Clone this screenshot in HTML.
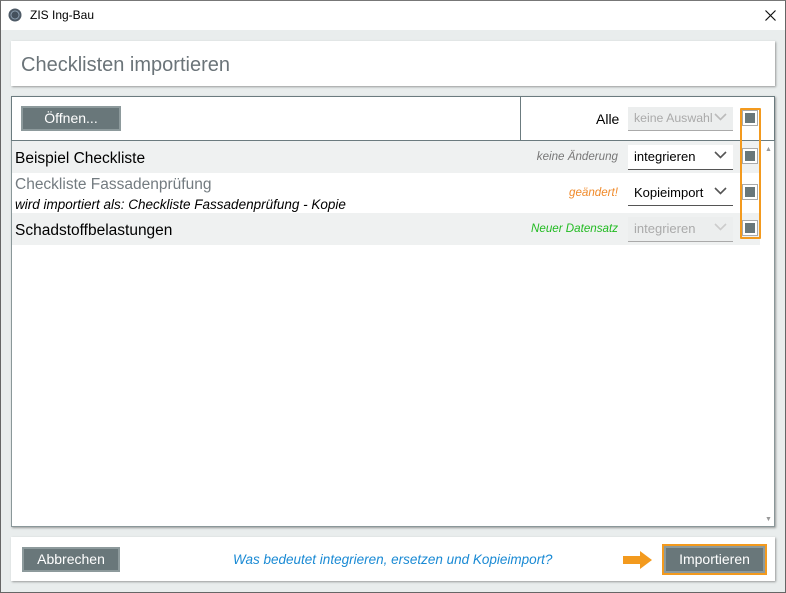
<!DOCTYPE html>
<html><head><meta charset="utf-8"><style>
*{box-sizing:border-box;margin:0;padding:0}
body{width:786px;height:593px;background:#e9eded;font-family:"Liberation Sans","DejaVu Sans",sans-serif;position:relative;overflow:hidden}
.abs{position:absolute}
.win{left:0;top:0;width:786px;height:593px;border:1px solid #666;border-top:1px solid #777}
.title{left:1px;top:1px;width:784px;height:29px;background:#fff}
.panel{background:#fff;box-shadow:1px 1px 2px rgba(0,0,0,.35)}
.btn{background:#69777a;color:#fff;border:2px solid #8d9a9c;font-size:14px;text-align:center}
.sel{border-bottom:1px solid #555;font-size:13px;padding:4px 0 0 6px;background:#fff;white-space:nowrap;overflow:hidden}
.sel.dis{background:#eceeee;color:#aaa;border-bottom-color:#aaa}
.chev{position:absolute;right:6px;top:6px}
.cb{width:16px;height:16px;border:1px solid #aaa;background:#fff}
.cb i{position:absolute;left:2px;top:2px;width:10px;height:10px;background:#69777a}
.lab{font-size:11.6px;font-style:italic;top:0}
</style></head><body>
<div class="abs win"></div>
<div class="abs title">
 <svg class="abs" style="left:7px;top:7px" width="14" height="14"><circle cx="7" cy="7" r="6.5" fill="#4e5a66"/><circle cx="7" cy="7" r="4.5" fill="#8fa2b4"/><circle cx="7" cy="7" r="3.6" fill="#44505c"/></svg>
 <div class="abs" style="left:29px;top:7px;font-size:12px;color:#000">ZIS Ing-Bau</div>
 <svg class="abs" style="left:764px;top:9px" width="11" height="11"><path d="M0.5 0.5L10.5 10.5M10.5 0.5L0.5 10.5" stroke="#111" stroke-width="1.2"/></svg>
</div>
<div class="abs panel" style="left:11px;top:41px;width:764px;height:45px">
 <div class="abs" style="left:10px;top:13px;font-size:20px;color:#6b7479">Checklisten importieren</div>
</div>
<div class="abs panel" style="left:11px;top:96px;width:764px;height:431px;border:1px solid #8a9799"></div>
<div class="abs" style="left:11px;top:96px;width:764px;height:45px;border:1px solid #6b7b7f"></div>
<div class="abs" style="left:520px;top:96px;width:1px;height:45px;background:#6b7b7f"></div>
<div class="abs btn" style="left:21px;top:106px;width:100px;height:25px;line-height:21px">Öffnen...</div>
<div class="abs" style="left:596px;top:111px;font-size:14px">Alle</div>
<div class="abs sel dis" style="left:628px;top:107px;width:105px;height:24px;font-size:12.3px;padding-left:6px">keine Auswahl<svg class="chev" width="13" height="8" style="background:#eceeee"><path d="M1 1l5.5 5.5L12 1" stroke="#bbb" stroke-width="1.6" fill="none"/></svg></div>

<div class="abs" style="left:12px;top:141px;width:748px;height:32px;background:#eff1f1"></div>
<div class="abs" style="left:12px;top:213px;width:748px;height:32px;background:#eff1f1"></div>
<div class="abs" style="left:15px;top:150px;font-size:15.5px">Beispiel Checkliste</div>
<div class="abs" style="left:15px;top:176px;font-size:15.5px;color:#737b80">Checkliste Fassadenprüfung</div>
<div class="abs" style="left:15px;top:197px;font-size:13.5px;font-style:italic">wird importiert als: Checkliste Fassadenprüfung - Kopie</div>
<div class="abs" style="left:15px;top:222px;font-size:15.5px">Schadstoffbelastungen</div>
<div class="abs lab" style="right:168px;top:150px;color:#777">keine Änderung</div>
<div class="abs lab" style="right:168px;top:186px;color:#f08a2a">geändert!</div>
<div class="abs lab" style="right:168px;top:222px;color:#22bb22">Neuer Datensatz</div>
<div class="abs sel" style="left:628px;top:145px;width:105px;height:25px">integrieren<svg class="chev" width="13" height="8"><path d="M1 1l5.5 5.5L12 1" stroke="#555" stroke-width="1.6" fill="none"/></svg></div>
<div class="abs sel" style="left:628px;top:181px;width:105px;height:25px">Kopieimport<svg class="chev" width="13" height="8"><path d="M1 1l5.5 5.5L12 1" stroke="#555" stroke-width="1.6" fill="none"/></svg></div>
<div class="abs sel dis" style="left:628px;top:217px;width:105px;height:25px">integrieren<svg class="chev" width="13" height="8"><path d="M1 1l5.5 5.5L12 1" stroke="#ccc" stroke-width="1.6" fill="none"/></svg></div>

<div class="abs cb" style="left:742px;top:110px"><i></i></div>
<div class="abs cb" style="left:742px;top:148px"><i></i></div>
<div class="abs cb" style="left:742px;top:184px"><i></i></div>
<div class="abs cb" style="left:742px;top:220px"><i></i></div>
<div class="abs" style="left:740px;top:108px;width:21px;height:131px;border:2px solid #f39a1e;border-radius:1px"></div>
<div class="abs" style="left:765px;top:146px;font-size:7px;color:#999">▲</div>
<div class="abs" style="left:765px;top:516px;font-size:7px;color:#999">▼</div>

<div class="abs panel" style="left:11px;top:537px;width:764px;height:44px"></div>
<div class="abs btn" style="left:22px;top:547px;width:98px;height:25px;line-height:21px">Abbrechen</div>
<div class="abs" style="left:233px;top:552px;font-size:13.5px;font-style:italic;color:#1a8ad4">Was bedeutet integrieren, ersetzen und Kopieimport?</div>
<svg class="abs" style="left:623px;top:551px" width="30" height="18"><path d="M0 5h17V0l12 9-12 9v-5H0z" fill="#f39a1e"/></svg>
<div class="abs" style="left:662px;top:544px;width:105px;height:31px;border:2px solid #f39a1e"></div>
<div class="abs btn" style="left:664px;top:546px;width:101px;height:27px;line-height:23px">Importieren</div>
</body></html>
